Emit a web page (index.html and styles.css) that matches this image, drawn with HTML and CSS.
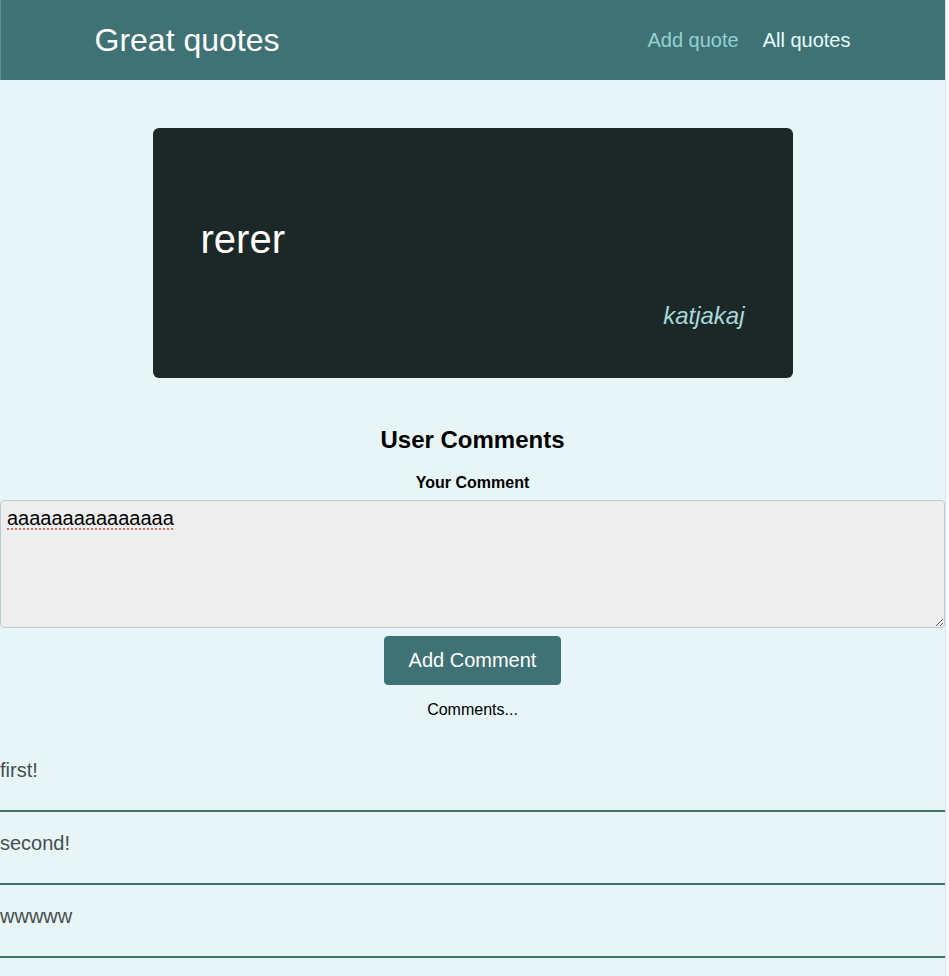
FILE: index.html
```html
<!DOCTYPE html>
<html lang="en">
<head>
  <meta charset="utf-8">
  <meta name="viewport" content="width=device-width, initial-scale=1">
  <title>Great quotes</title>
  <link rel="stylesheet" href="styles.css">
</head>
<body>
  <div class="page">
    <header class="header">
      <div class="logo">Great quotes</div>
      <nav class="nav">
        <a class="nav-link" href="#add">Add quote</a>
        <a class="nav-link active" href="#all">All quotes</a>
      </nav>
    </header>
    <main>
      <figure class="quote">
        <p>rerer</p>
        <figcaption>katjakaj</figcaption>
      </figure>
      <section class="comments">
        <h2>User Comments</h2>
        <form class="form">
          <label for="comment">Your Comment</label>
          <textarea id="comment" rows="5">aaaaaaaaaaaaaaa</textarea>
          <button class="btn" type="button">Add Comment</button>
        </form>
        <p class="status">Comments...</p>
        <ul class="comment-list">
          <li>first!</li>
          <li>second!</li>
          <li>wwwww</li>
        </ul>
      </section>
    </main>
  </div>
</body>
</html>
```
FILE: styles.css
```css
* {
  box-sizing: border-box;
}

html {
  background: #fafafa;
}

body {
  margin: 0;
  padding-right: 3px;
  font-family: "Liberation Sans", Arial, sans-serif;
  font-size: 16px;
  line-height: 18px;
  color: #000;
}

.page {
  min-height: 100vh;
  background: #e7f5f7;
  border-right: 1px solid #dfe3e4;
}

.header {
  display: flex;
  justify-content: space-between;
  align-items: center;
  height: 80px;
  padding: 0 10%;
  background: #3f7274;
  box-shadow: inset 1px 0 #668e90;
}

.logo {
  font-size: 32px;
  line-height: 38px;
  color: #fff;
}

.nav {
  display: flex;
  gap: 24px;
  font-size: 20px;
  line-height: 23px;
}

.nav-link {
  color: #93d2d4;
  text-decoration: none;
}

.nav-link.active {
  color: #e6fcfc;
}

.quote {
  max-width: 640px;
  margin: 48px auto;
  padding: 48px;
  border-radius: 6px;
  background: #1c2727;
}

.quote p {
  margin: 40px 0;
  font-size: 40px;
  line-height: 46px;
  color: #fff;
}

.quote figcaption {
  font-size: 24px;
  line-height: 28px;
  font-style: italic;
  text-align: right;
  color: #a7d9da;
}

.comments {
  text-align: center;
}

.comments h2 {
  margin: 0 0 20px;
  font-size: 24px;
  line-height: 28px;
}

.form {
  display: flex;
  flex-direction: column;
  align-items: center;
  gap: 8px;
}

.form label {
  font-weight: bold;
}

.form textarea {
  display: block;
  width: 100%;
  padding: 6px 6px 5px;
  border: 1px solid #b8cccd;
  border-radius: 4px;
  outline: none;
  background: #eee;
  color: #000;
  font: inherit;
  font-size: 20px;
  line-height: 23px;
  text-decoration: underline dotted #e0685c 2px;
  text-decoration-skip-ink: none;
  text-underline-offset: 3px;
  resize: vertical;
}

.btn {
  padding: 12px 24px;
  border: 1px solid #3f7274;
  border-radius: 4px;
  background: #3f7274;
  color: #fff;
  font: inherit;
  font-size: 20px;
  line-height: 23px;
  cursor: pointer;
}

.status {
  margin: 16px 0 20px;
}

.comment-list {
  margin: 0;
  padding: 0;
  list-style: none;
  text-align: left;
  font-size: 20px;
  line-height: 23px;
  color: #474f4f;
}

.comment-list li {
  padding: 20px 0 28px;
  border-bottom: 2px solid #3f7274;
}
```
